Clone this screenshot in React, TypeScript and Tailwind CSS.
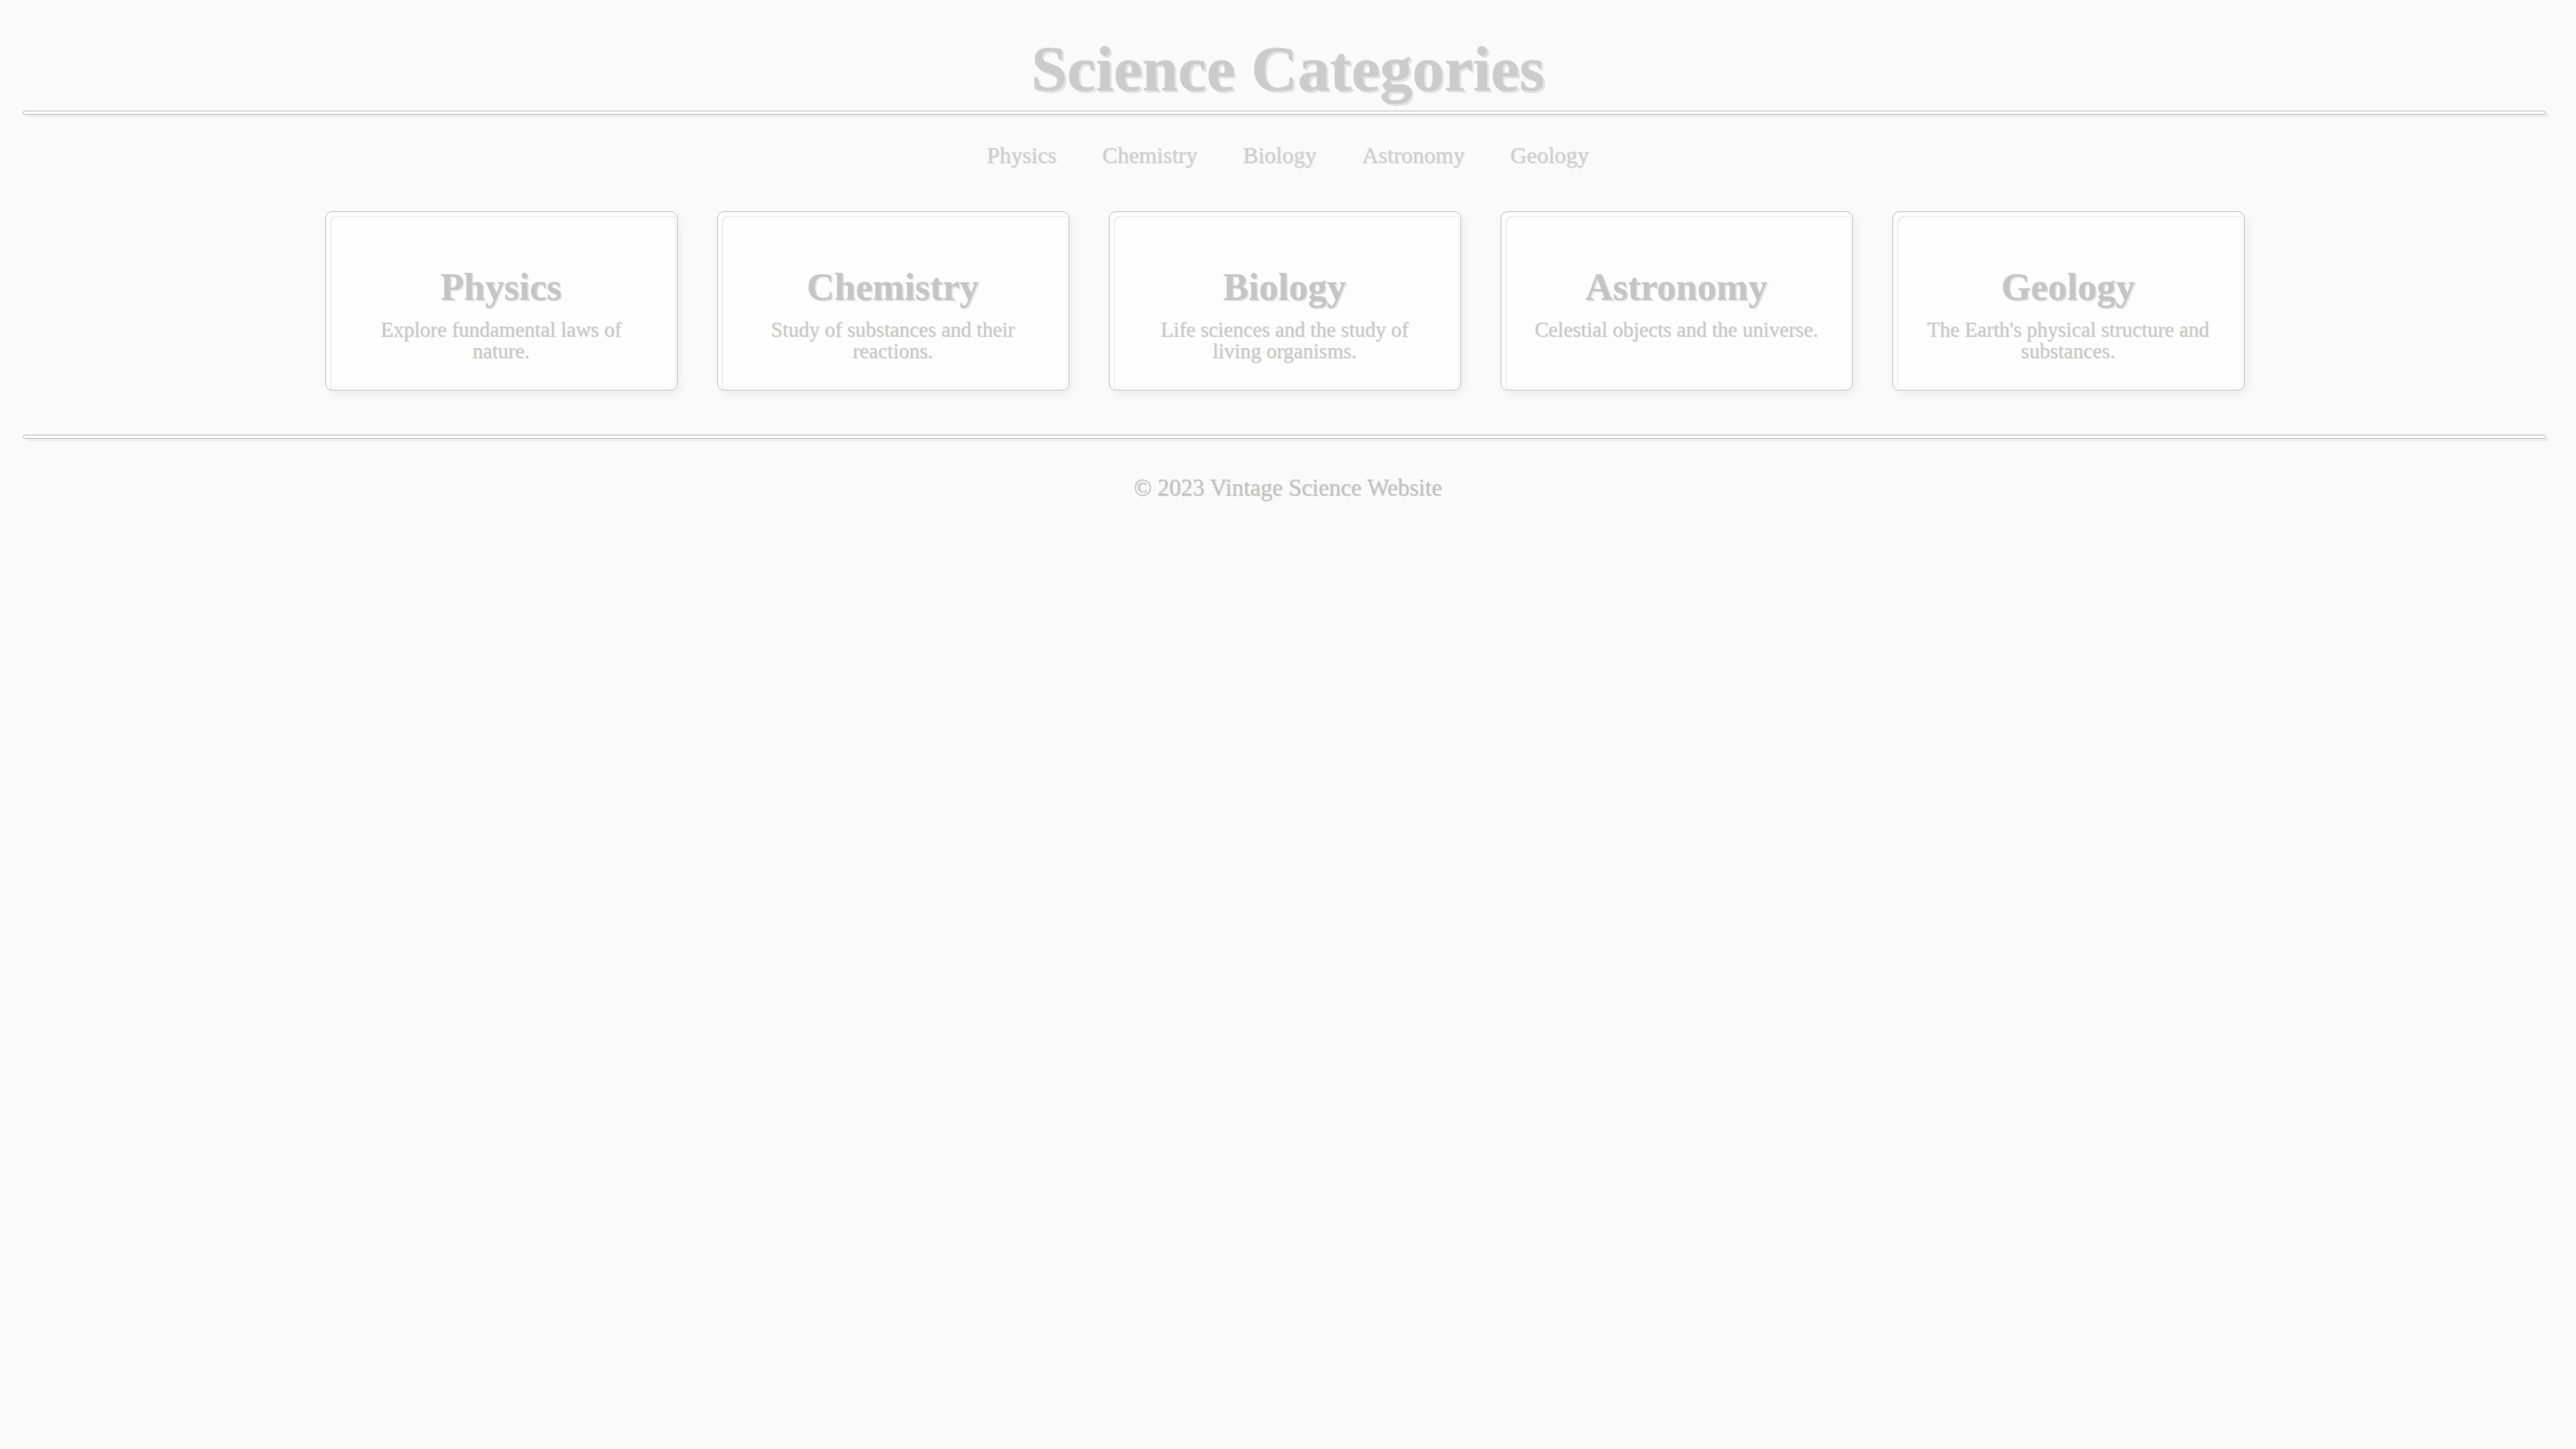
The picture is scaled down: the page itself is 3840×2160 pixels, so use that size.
const categories = [
  { name: "Physics", text: "Explore fundamental laws of nature." },
  { name: "Chemistry", text: "Study of substances and their reactions." },
  { name: "Biology", text: "Life sciences and the study of living organisms." },
  { name: "Astronomy", text: "Celestial objects and the universe." },
  { name: "Geology", text: "The Earth's physical structure and substances." },
];

function Rule({ className = "" }: { className?: string }) {
  return (
    <div
      className={`ml-[34px] mr-[45px] h-[6px] rounded-[3px] border border-[#b4b4b4] bg-white shadow-[5px_4px_0_#eeeeee] ${className}`}
    />
  );
}

function CategoryCard({ name, text }: { name: string; text: string }) {
  return (
    <div className="w-[525px] rounded-[10px] border border-[#bcbcbc] bg-[#fdfdfd] px-[40px] pt-[83px] pb-[41px] text-center shadow-[inset_6px_6px_0_#fdfdfd,inset_-2px_-2px_0_#fdfdfd,inset_8px_8px_0_#efefef,inset_-3px_-3px_0_#f1f1f1,4px_6px_14px_rgba(0,0,0,0.06)]">
      <h2 className="text-[57px] font-bold leading-none text-[#c5c5c5] [text-shadow:-1px_-1px_0_rgba(160,160,160,0.18),2px_2px_0_#e4e4e4]">
        {name}
      </h2>
      <p className="mt-[20px] text-[31px] leading-[32px] text-[#c9c9c9] [text-shadow:-1px_-1px_0_rgba(160,160,160,0.15),1px_1px_0_#e8e8e8]">
        {text}
      </p>
    </div>
  );
}

export default function App() {
  return (
    <div className="min-h-screen bg-[#fafafa] pb-10 font-['Liberation_Serif','Times_New_Roman',serif]">
      <header className="pt-[55px] text-center">
        <h1 className="text-[96px] font-bold leading-none text-[#cbcbcb] [text-shadow:-1px_-1px_0_rgba(150,150,150,0.2),3px_3px_0_#e2e2e2]">
          Science Categories
        </h1>
      </header>

      <Rule className="mt-[14px]" />

      <nav className="mt-[44px] flex justify-center gap-[68px] text-[34px] leading-none text-[#cfcfcf] [text-shadow:-1px_-1px_0_rgba(150,150,150,0.18),1px_1px_0_#e6e6e6]">
        {categories.map((c) => (
          <a key={c.name} href="#">
            {c.name}
          </a>
        ))}
      </nav>

      <main className="mt-[66px] flex justify-center gap-[59px] pr-[10px]">
        {categories.map((c) => (
          <CategoryCard key={c.name} name={c.name} text={c.text} />
        ))}
      </main>

      <Rule className="mt-[66px]" />

      <footer className="mt-[56px] text-center text-[35px] leading-none text-[#c2c2c2] [text-shadow:-1px_-1px_0_rgba(150,150,150,0.18),1px_1px_0_#e6e6e6]">
        © 2023 Vintage Science Website
      </footer>
    </div>
  );
}
